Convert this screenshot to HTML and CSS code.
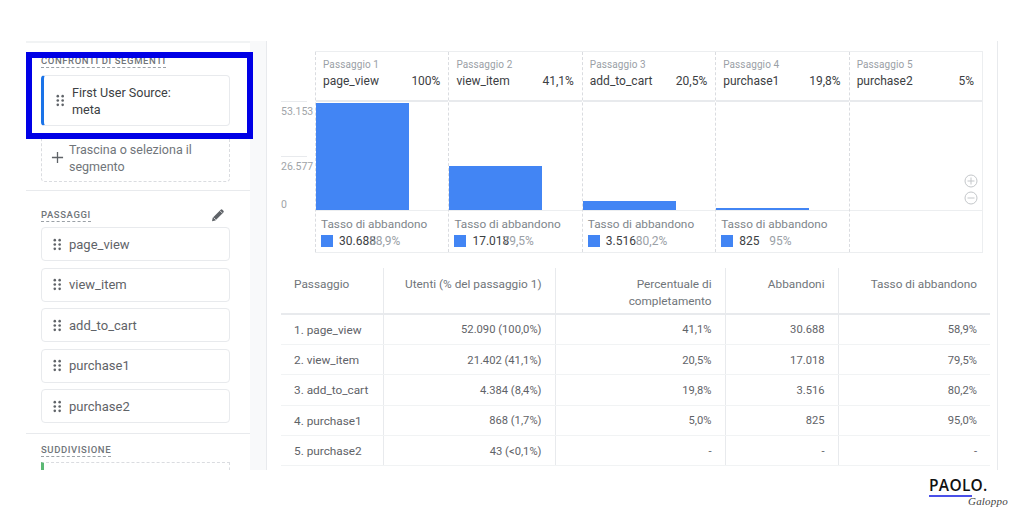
FILE: index.html
```html
<!DOCTYPE html>
<html lang="it">
<head>
  <meta charset="UTF-8">
  <title>Esplorazione del funnel</title>
  <link rel="stylesheet" href="styles.css">
</head>
<body>
  <svg class="defs" width="0" height="0">
    <symbol id="dots" viewBox="0 0 8 12">
      <circle cx="1.5" cy="2" r="1.2"/><circle cx="6" cy="2" r="1.2"/>
      <circle cx="1.5" cy="6" r="1.2"/><circle cx="6" cy="6" r="1.2"/>
      <circle cx="1.5" cy="10" r="1.2"/><circle cx="6" cy="10" r="1.2"/>
    </symbol>
  </svg>

  <div class="app">
    <aside class="sidebar">
      <section class="side-sec seg-sec">
        <div class="label">CONFRONTI DI SEGMENTI</div>
        <div class="card card-seg">
          <svg class="dots"><use href="#dots"/></svg>
          <span>First User Source:<br>meta</span>
        </div>
        <div class="card card-drop">
          <svg class="plus" viewBox="0 0 14 14"><path d="M7 1v12M1 7h12"/></svg>
          <span>Trascina o seleziona il<br>segmento</span>
        </div>
      </section>

      <section class="side-sec steps-sec">
        <div class="label-row">
          <div class="label">PASSAGGI</div>
          <svg class="pencil" viewBox="0 0 16 16"><path d="M2 14.2l.7-3.4 8-8a1.2 1.2 0 0 1 1.7 0l1 1a1.2 1.2 0 0 1 0 1.7l-8 8z"/><path class="pencil-cut" d="M3.6 10.6l2.2 2.2M10 3.8l2.2 2.2"/></svg>
        </div>
        <div class="card card-step"><svg class="dots"><use href="#dots"/></svg>page_view</div>
        <div class="card card-step"><svg class="dots"><use href="#dots"/></svg>view_item</div>
        <div class="card card-step"><svg class="dots"><use href="#dots"/></svg>add_to_cart</div>
        <div class="card card-step"><svg class="dots"><use href="#dots"/></svg>purchase1</div>
        <div class="card card-step"><svg class="dots"><use href="#dots"/></svg>purchase2</div>
      </section>

      <section class="side-sec split-sec">
        <div class="label">SUDDIVISIONE</div>
        <div class="card card-split"></div>
      </section>

      <div class="highlight"></div>
    </aside>

    <div class="strip"></div>

    <main class="main">
      <div class="funnel">
        <div class="axis">
          <div class="tick">53.153</div>
          <div class="tick">26.577</div>
          <div class="tick-zero">0</div>
        </div>
        <div class="chart">
          <div class="step">
            <div class="step-head">
              <div class="step-num">Passaggio 1</div>
              <div class="step-name"><span>page_view</span><span>100%</span></div>
            </div>
            <div class="plot"><div class="bar" style="height: 107px"></div></div>
            <div class="drop">
              <div class="drop-title">Tasso di abbandono</div>
              <div class="drop-val"><i class="swatch"></i><span class="val">30.688</span><span class="pct">58,9%</span></div>
            </div>
          </div>
          <div class="step">
            <div class="step-head">
              <div class="step-num">Passaggio 2</div>
              <div class="step-name"><span>view_item</span><span>41,1%</span></div>
            </div>
            <div class="plot"><div class="bar" style="height: 44px"></div></div>
            <div class="drop">
              <div class="drop-title">Tasso di abbandono</div>
              <div class="drop-val"><i class="swatch"></i><span class="val">17.018</span><span class="pct">79,5%</span></div>
            </div>
          </div>
          <div class="step">
            <div class="step-head">
              <div class="step-num">Passaggio 3</div>
              <div class="step-name"><span>add_to_cart</span><span>20,5%</span></div>
            </div>
            <div class="plot"><div class="bar" style="height: 9px"></div></div>
            <div class="drop">
              <div class="drop-title">Tasso di abbandono</div>
              <div class="drop-val"><i class="swatch"></i><span class="val">3.516</span><span class="pct">80,2%</span></div>
            </div>
          </div>
          <div class="step">
            <div class="step-head">
              <div class="step-num">Passaggio 4</div>
              <div class="step-name"><span>purchase1</span><span>19,8%</span></div>
            </div>
            <div class="plot"><div class="bar" style="height: 2px"></div></div>
            <div class="drop">
              <div class="drop-title">Tasso di abbandono</div>
              <div class="drop-val"><i class="swatch"></i><span class="val">825</span><span class="pct">95%</span></div>
            </div>
          </div>
          <div class="step">
            <div class="step-head">
              <div class="step-num">Passaggio 5</div>
              <div class="step-name"><span>purchase2</span><span>5%</span></div>
            </div>
            <div class="plot">
              <div class="zoom">
                <svg viewBox="0 0 14 14"><circle cx="7" cy="7" r="6"/><path d="M3.5 7h7M7 3.5v7"/></svg>
                <svg viewBox="0 0 14 14"><circle cx="7" cy="7" r="6"/><path d="M3.5 7h7"/></svg>
              </div>
            </div>
            <div class="drop"></div>
          </div>
        </div>
      </div>

      <table class="report">
        <thead>
          <tr>
            <th>Passaggio</th>
            <th>Utenti (% del passaggio 1)</th>
            <th>Percentuale di completamento</th>
            <th>Abbandoni</th>
            <th>Tasso di abbandono</th>
          </tr>
        </thead>
        <tbody>
          <tr><td>1. page_view</td><td>52.090 (100,0%)</td><td>41,1%</td><td>30.688</td><td>58,9%</td></tr>
          <tr><td>2. view_item</td><td>21.402 (41,1%)</td><td>20,5%</td><td>17.018</td><td>79,5%</td></tr>
          <tr><td>3. add_to_cart</td><td>4.384 (8,4%)</td><td>19,8%</td><td>3.516</td><td>80,2%</td></tr>
          <tr><td>4. purchase1</td><td>868 (1,7%)</td><td>5,0%</td><td>825</td><td>95,0%</td></tr>
          <tr><td>5. purchase2</td><td>43 (&lt;0,1%)</td><td>-</td><td>-</td><td>-</td></tr>
        </tbody>
      </table>
    </main>
  </div>

  <div class="logo">
    <div class="logo-name">PAOLO.</div>
    <div class="logo-sign">Galoppo</div>
  </div>
</body>
</html>
```

FILE: styles.css
```css
* {
  box-sizing: border-box;
}

body {
  margin: 0;
  height: 512px;
  overflow: hidden;
  position: relative;
  background-color: #fff;
  color: #5f6368;
  font-family: Roboto, "Liberation Sans", sans-serif;
  font-size: 12px;
  padding: 41px 0 0 26px;
}

.defs {
  position: absolute;
}

.app {
  display: flex;
  width: 972px;
  height: 429px;
  overflow: hidden;
}

/* left panel */
.sidebar {
  position: relative;
  width: 224px;
  flex-shrink: 0;
  border-top: 2px solid #f1f3f4;
}

.side-sec {
  padding: 0 20px 0 15px;
  border-bottom: 1px solid #e8eaed;
}

.seg-sec {
  height: 148px;
  padding-top: 10px;
}

.steps-sec {
  height: 243px;
  padding-top: 18px;
}

.split-sec {
  border-bottom: 0;
  padding-top: 8px;
}

.label {
  display: inline-block;
  font-size: 9.5px;
  font-weight: 500;
  letter-spacing: 0.6px;
  line-height: 12px;
  color: #70757a;
  border-bottom: 1px dashed #9aa0a6;
}

.label-row {
  display: flex;
  justify-content: space-between;
  align-items: flex-start;
  height: 18px;
}

.pencil {
  width: 16px;
  height: 16px;
  margin-right: 4px;
  margin-top: -2px;
}

.pencil path {
  fill: #5f6368;
}

.pencil .pencil-cut {
  fill: none;
  stroke: #fff;
  stroke-width: 0.7;
}

.card {
  display: flex;
  align-items: center;
  width: 189px;
  background-color: #fff;
  border: 1px solid #e8eaed;
  border-radius: 4px;
  font-size: 13px;
  line-height: 17px;
  color: #5f6368;
}

.dots {
  width: 9px;
  height: 13px;
  flex-shrink: 0;
  fill: #5f6368;
}

.card-seg {
  height: 51px;
  margin-top: 7px;
  padding-left: 12px;
  border-left: 3px solid #1a73e8;
  color: #3c4043;
  font-size: 12.6px;
}

.card-seg .dots {
  margin-right: 7px;
}

.card-drop {
  height: 49px;
  margin-top: 7px;
  padding: 0 0 0 9px;
  border: 1px dashed #dadce0;
  color: #70757a;
  font-size: 12.5px;
}

.plus {
  width: 13px;
  height: 13px;
  margin-right: 5px;
  flex-shrink: 0;
}

.plus path {
  stroke: #5f6368;
  stroke-width: 1.4;
  fill: none;
}

.card-step {
  height: 34px;
  margin-bottom: 6.6px;
  padding-left: 11px;
}

.card-step .dots {
  margin-right: 7px;
}

.card-split {
  height: 30px;
  margin-top: 5px;
  border: 1px dashed #dadce0;
  border-left: 3px solid #5bb974;
  border-radius: 0;
}

.highlight {
  position: absolute;
  left: 0;
  top: 9px;
  width: 227px;
  height: 87px;
  border: 6.5px solid #0000e6;
}

.strip {
  width: 17px;
  flex-shrink: 0;
  background-color: #f8f9fa;
  border-right: 1px solid #e8eaed;
}

/* chart and table */
.main {
  width: 731px;
  flex-shrink: 0;
  padding: 10px 0 0 14px;
  border-right: 1px solid #e8eaed;
}

.funnel {
  display: flex;
}

.axis {
  width: 34px;
  padding-top: 50px;
  display: flex;
  flex-direction: column;
  font-size: 10.5px;
  line-height: 13px;
  color: #a0a4a8;
}

.tick {
  height: 54.5px;
  margin-right: 8px;
  border-top: 1px solid #e8eaed;
  padding-top: 3px;
  white-space: nowrap;
}

.tick-zero {
  margin-top: -12px;
}

.chart {
  display: flex;
  width: 668px;
  height: 202px;
  border: 1px solid #eceef0;
  border-left: 0;
}

.step {
  flex: 1;
  display: flex;
  flex-direction: column;
  border-left: 1px dashed #dadce0;
}

.step-head {
  height: 50px;
  padding: 6px 8px 0 7px;
  border-bottom: 2px solid #e8eaed;
}

.step-num {
  font-size: 10px;
  line-height: 14px;
  color: #9aa0a6;
  letter-spacing: 0.1px;
}

.step-name {
  display: flex;
  justify-content: space-between;
  margin-top: 1px;
  font-size: 12px;
  line-height: 16px;
  color: #3c4043;
}

.plot {
  position: relative;
  height: 109px;
  display: flex;
  align-items: flex-end;
  border-bottom: 1px solid #eceef0;
}

.bar {
  width: 93px;
  background-color: #4285f4;
}

.zoom {
  position: absolute;
  right: 4px;
  bottom: 5px;
  display: flex;
  flex-direction: column;
  gap: 3px;
}

.zoom svg {
  display: block;
  width: 14px;
  height: 14px;
}

.zoom circle,
.zoom path {
  fill: none;
  stroke: #c4c7ca;
  stroke-width: 1;
}

.drop {
  flex: 1;
  padding: 6px 0 0 5px;
}

.drop-title {
  font-size: 11.8px;
  line-height: 15px;
  color: #80868b;
}

.drop-val {
  display: flex;
  align-items: center;
  margin-top: 1px;
  font-size: 12px;
  line-height: 16px;
}

.swatch {
  width: 12px;
  height: 12px;
  margin-right: 6px;
  background-color: #4285f4;
}

/* fixed width: the reference's percentages start here, even under a long value */
.val {
  width: 30px;
  color: #3c4043;
  white-space: nowrap;
}

.pct {
  color: #9aa0a6;
}

.report {
  width: 709px;
  margin-top: 15px;
  table-layout: fixed;
  border-collapse: collapse;
  font-size: 11.2px;
}

.report th {
  height: 46px;
  padding: 8px 13px 0 14px;
  vertical-align: top;
  font-size: 11.8px;
  font-weight: 400;
  line-height: 17px;
  color: #70757a;
  text-align: right;
  border-left: 1px solid #e8eaed;
  border-bottom: 2px solid #e8eaed;
}

.report td {
  height: 30.4px;
  padding: 1px 13px 0 14px;
  text-align: right;
  white-space: nowrap;
  border-left: 1px solid #e8eaed;
  border-bottom: 1px solid #f1f3f4;
}

.report th:first-child,
.report td:first-child {
  width: 102px;
  padding-left: 13px;
  font-size: 11.8px;
  text-align: left;
  border-left: 0;
}

.report th:nth-child(2) {
  width: 172px;
}

.report th:nth-child(3) {
  width: 170px;
}

.report th:nth-child(4) {
  width: 113px;
}

.report th:nth-child(5) {
  width: 152px;
}

/* watermark */
.logo {
  position: absolute;
  left: 929px;
  top: 476px;
  width: 85px;
  height: 36px;
}

.logo-name {
  width: 43px;
  font-family: "Open Sans", sans-serif;
  font-size: 15.5px;
  font-weight: 600;
  line-height: 19px;
  letter-spacing: 0.3px;
  color: #111;
  white-space: nowrap;
  border-bottom: 2px solid #4a50e8;
}

.logo-sign {
  margin: -2px 0 0 39px;
  font-family: "Liberation Serif", serif;
  font-style: italic;
  font-size: 11px;
  line-height: 12px;
  letter-spacing: 0.2px;
  color: #444;
}
```
